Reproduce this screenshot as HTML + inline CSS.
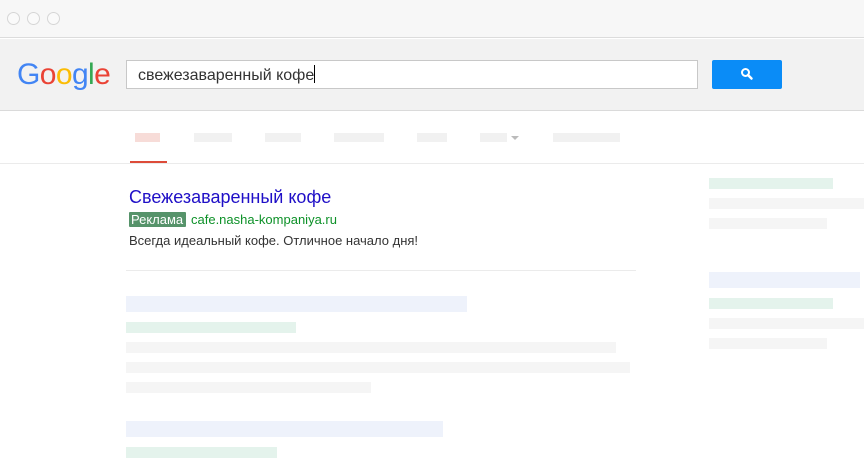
<!DOCTYPE html>
<html><head><meta charset="utf-8"><style>
*{margin:0;padding:0;box-sizing:border-box}
body{width:864px;height:456px;overflow:hidden;background:#fff;font-family:"Liberation Sans",Arial,sans-serif;position:relative}
.a{position:absolute}
.c{position:absolute;top:12px;width:13px;height:13px;border-radius:50%;border:1px solid #d6d6d6;background:#fafafa}
.b{position:absolute}
</style></head><body>
<div class="a" style="left:0;top:0;width:864px;height:38px;background:#f7f7f7;border-bottom:1px solid #dcdcdc"></div>
<div class="c" style="left:7px"></div><div class="c" style="left:27px"></div><div class="c" style="left:47px"></div>
<div class="a" style="left:0;top:39px;width:864px;height:72px;background:#f2f2f2;border-bottom:1px solid #dadada"></div>
<div class="a" style="left:17px;top:58px;font-size:30px;letter-spacing:-0.6px;line-height:34px;font-family:'Liberation Sans',sans-serif"><span style="color:#4285f4">G</span><span style="color:#ea4335">o</span><span style="color:#fbbc05">o</span><span style="color:#4285f4">g</span><span style="color:#34a853">l</span><span style="color:#ea4335">e</span></div>
<div class="a" style="left:126px;top:60px;width:572px;height:29px;background:#fff;border:1px solid #c8c8c8"></div>
<div class="a" style="left:138px;top:65px;font-size:16px;color:#333;line-height:20px">свежезаваренный кофе<span style="display:inline-block;width:1px;height:18px;background:#000;vertical-align:-3px"></span></div>
<div class="a" style="left:712px;top:60px;width:70px;height:29px;background:#0a8cf7;border-radius:2px"></div>
<svg class="a" style="left:739px;top:66px" width="16" height="16" viewBox="0 0 16 16"><circle cx="6.5" cy="6.5" r="3.5" fill="none" stroke="#fff" stroke-width="2"/><path d="M9 9l3.5 3.5" stroke="#fff" stroke-width="2.5" stroke-linecap="round"/></svg>
<div class="b" style="left:135px;top:133px;width:25px;height:9px;background:#f7dcd8"></div>
<div class="b" style="left:130px;top:161px;width:37px;height:2px;background:#dd4b39"></div>
<div class="b" style="left:194px;top:133px;width:38px;height:9px;background:#f1f1f1"></div>
<div class="b" style="left:265px;top:133px;width:36px;height:9px;background:#f1f1f1"></div>
<div class="b" style="left:334px;top:133px;width:50px;height:9px;background:#f1f1f1"></div>
<div class="b" style="left:417px;top:133px;width:30px;height:9px;background:#f1f1f1"></div>
<div class="b" style="left:480px;top:133px;width:27px;height:9px;background:#f1f1f1"></div>
<div class="b" style="left:511px;top:136px;width:0;height:0;border-left:4px solid transparent;border-right:4px solid transparent;border-top:4px solid #bbb"></div>
<div class="b" style="left:553px;top:133px;width:67px;height:9px;background:#f1f1f1"></div>
<div class="b" style="left:0;top:163px;width:864px;height:1px;background:#ebebeb"></div>
<div class="a" style="left:129px;top:186px;font-size:18px;color:#1f0fc7;line-height:22px">Свежезаваренный кофе</div>
<div class="a" style="left:129px;top:212px;height:15px;width:57px;background:#56936a;border-radius:1px"></div>
<div class="a" style="left:131px;top:211px;font-size:13px;color:#fff;line-height:17px">Реклама</div>
<div class="a" style="left:191px;top:211px;font-size:13px;color:#0d9128;line-height:17px">cafe.nasha-kompaniya.ru</div>
<div class="a" style="left:129px;top:232px;font-size:13px;color:#333;line-height:17px">Всегда идеальный кофе. Отличное начало дня!</div>
<div class="b" style="left:126px;top:270px;width:510px;height:1px;background:#ebebeb"></div>
<div class="b" style="left:126px;top:296px;width:341px;height:16px;background:#eef2fb"></div>
<div class="b" style="left:126px;top:322px;width:170px;height:11px;background:#e4f3ec"></div>
<div class="b" style="left:126px;top:342px;width:490px;height:11px;background:#f5f5f5"></div>
<div class="b" style="left:126px;top:362px;width:504px;height:11px;background:#f5f5f5"></div>
<div class="b" style="left:126px;top:382px;width:245px;height:11px;background:#f5f5f5"></div>
<div class="b" style="left:126px;top:421px;width:317px;height:16px;background:#eef2fb"></div>
<div class="b" style="left:126px;top:447px;width:151px;height:11px;background:#e4f3ec"></div>
<div class="b" style="left:709px;top:178px;width:124px;height:11px;background:#e4f3ec"></div>
<div class="b" style="left:709px;top:198px;width:155px;height:11px;background:#f5f5f5"></div>
<div class="b" style="left:709px;top:218px;width:118px;height:11px;background:#f5f5f5"></div>
<div class="b" style="left:709px;top:272px;width:151px;height:16px;background:#eef2fb"></div>
<div class="b" style="left:709px;top:298px;width:124px;height:11px;background:#e4f3ec"></div>
<div class="b" style="left:709px;top:318px;width:155px;height:11px;background:#f5f5f5"></div>
<div class="b" style="left:709px;top:338px;width:118px;height:11px;background:#f5f5f5"></div>
</body></html>
